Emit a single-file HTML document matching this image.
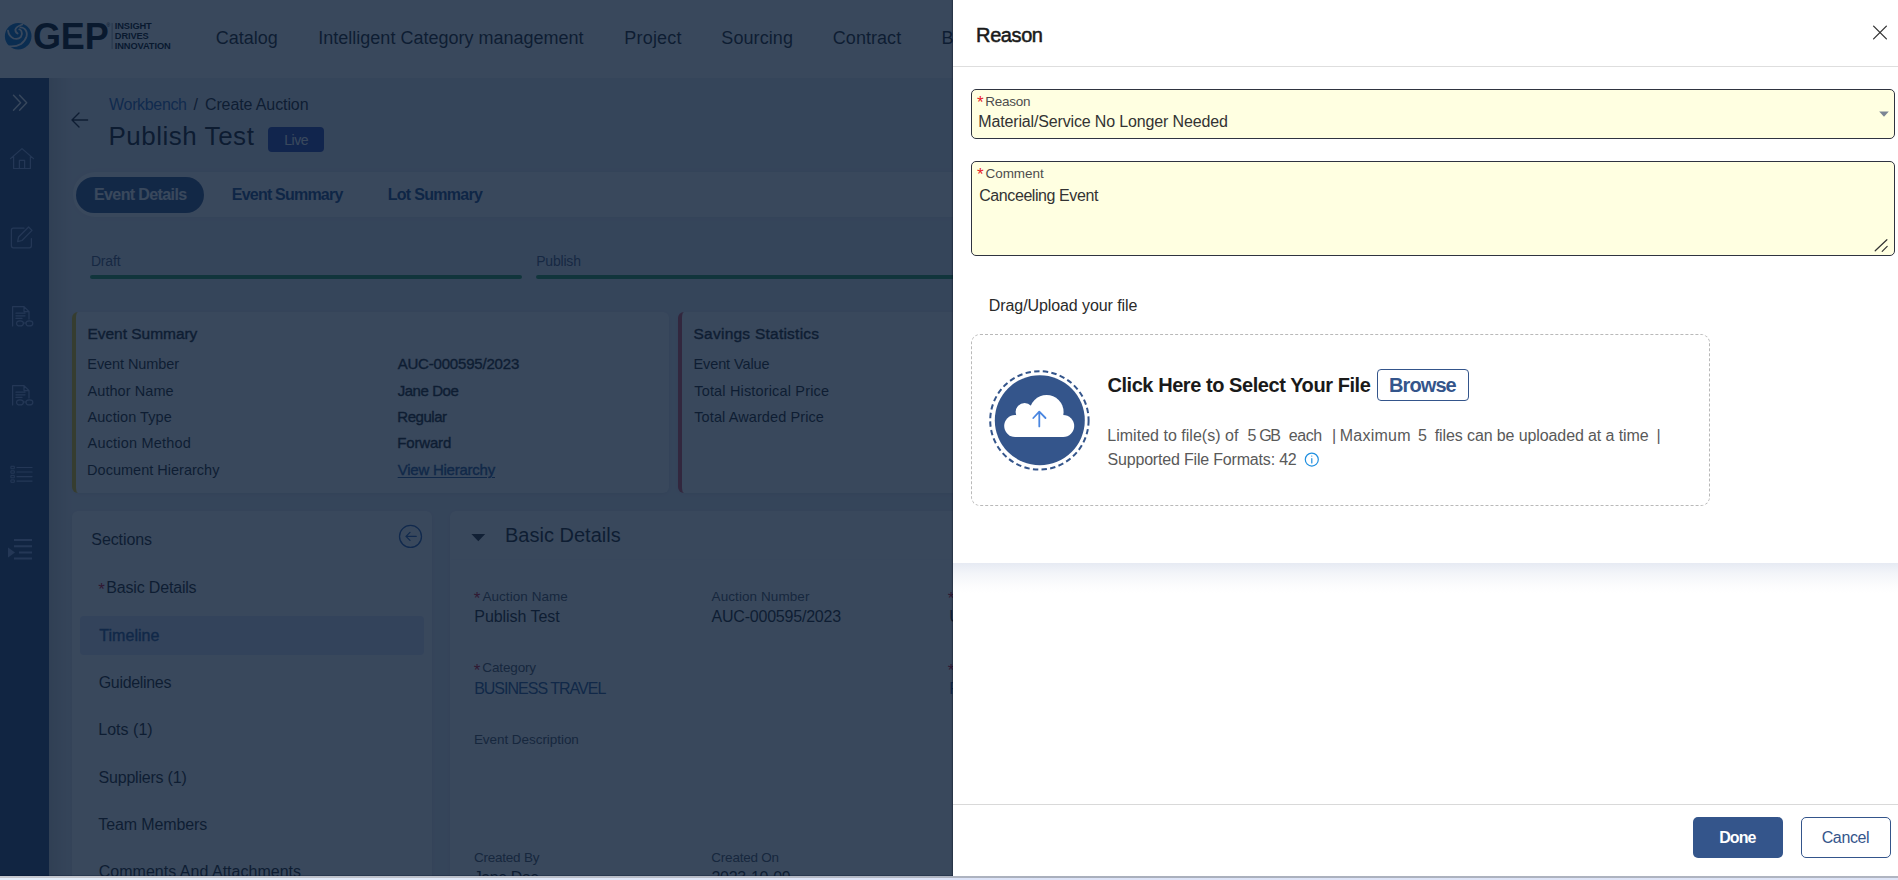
<!DOCTYPE html>
<html lang="en">
<head>
<meta charset="utf-8">
<title>Publish Test - Create Auction</title>
<style>
*{box-sizing:border-box;margin:0;padding:0}
html,body{width:1898px;height:880px;overflow:hidden;background:#ebedf5;font-family:"Liberation Sans",sans-serif}
#app{position:absolute;left:0;top:0;width:1898px;height:880px;overflow:hidden}
.a{position:absolute}
.t{position:absolute;white-space:nowrap;line-height:1}
svg{position:absolute;overflow:visible}
/* underlay */
#hdr{left:0;top:0;width:1898px;height:78px;background:#fff}
#side{left:0;top:78px;width:49px;height:802px;background:#2c4878}
#sideshadow{left:49px;top:78px;width:24px;height:802px;background:linear-gradient(90deg,rgba(120,120,100,.22),rgba(120,120,100,0))}
#tabs{left:73px;top:172px;width:1000px;height:45px;background:#fdfdfd;border-radius:22px 0 0 22px;box-shadow:0 0 6px rgba(0,0,0,.06)}
#pill{left:76px;top:177px;width:128px;height:36px;border-radius:18px;background:#34558b}
#badge{left:268px;top:127px;width:56px;height:25px;border-radius:4px;background:#2a44b0}
.bar{height:4px;border-radius:2px;background:#2f9c58;top:275px}
.card{background:#fdfdfd;border-radius:6px;box-shadow:0 1px 4px rgba(0,0,0,.08)}
#c1{left:72px;top:312px;width:597px;height:181px;border-left:4px solid #f0c419}
#c2{left:678px;top:312px;width:600px;height:181px;border-left:4px solid #d8505f}
#sec{left:72px;top:510.7px;width:360px;height:400px}
#sechl{left:80px;top:616px;width:344px;height:39px;border-radius:4px;background:#dde3f8}
#bd{left:450px;top:510.7px;width:1000px;height:400px}
#bdhead{left:451px;top:511px;width:1000px;height:49px;border-bottom:1px solid #fafafb}
.tg{font-size:9.3px;font-weight:700;color:#00060f;letter-spacing:-.12px}
/* overlay */
#ov{left:0;top:0;width:1898px;height:880px;background:rgba(11,29,54,.81)}
/* panel */
#panel{left:953px;top:0;width:945px;height:880px;background:#fff;box-shadow:-1px 0 1px rgba(0,5,20,.28)}
#pshadow{left:953px;top:563px;width:945px;height:30px;background:linear-gradient(180deg,#e6eaf3 0,#f3f5f9 35%,#fcfcfd 75%,#fff 100%)}
#pcard{left:953px;top:0;width:945px;height:563px;background:#fff;border-radius:0 0 0 7px}
#phl{left:953px;top:66px;width:945px;height:1px;background:#dedede}
.fld{background:#ffffe1;border:1.5px solid #2f3440;border-radius:5px}
#f1{left:971px;top:89px;width:924px;height:50px}
#f2{left:971px;top:161px;width:924px;height:95px}
#drop{left:971px;top:334px;width:739px;height:172px;border:1px dashed #b9b9b9;border-radius:9px}
#browse{left:1377px;top:369px;width:92px;height:32px;border:1.5px solid #34558b;border-radius:4px;background:#fff}
#pfl{left:953px;top:804px;width:945px;height:1px;background:#d9d9d9}
#done{left:1693px;top:817px;width:90px;height:41px;border-radius:5px;background:#34558b}
#cancel{left:1801px;top:817px;width:90px;height:41px;border-radius:5px;border:1.5px solid #34558b;background:#fff}
#botline{left:0;top:876px;width:1898px;height:2px;background:linear-gradient(90deg,#c5c8cf 0,#b4b9c5 45%,#a9afbc 55%,#b0b5c1 100%)}
#botsh{left:0;top:875px;width:953px;height:1px;background:rgba(0,10,40,.25)}
#bot{left:0;top:878px;width:1898px;height:2px;background:linear-gradient(90deg,#e4eefa 0,#dde4f8 50%,#dfe5f7 100%)}
</style>
</head>
<body>
<div id="app">
<!-- ======= underlying page ======= -->
<div class="a" id="hdr"></div>
<div class="a" id="side"></div>
<div class="a" id="sideshadow"></div>
<svg id="logo" style="left:0;top:0" width="200" height="78" viewBox="0 0 200 78">
<circle cx="18.2" cy="36.2" r="13.3" fill="#0a6fc4"/>
<g fill="none" stroke="#fff" stroke-width="1.8" stroke-linecap="round" transform="translate(5,22.9)">
<path d="M17.3 1.6Q11.2 3.8 10.4 6.6Q10.2 9.2 12.6 10.6"/>
<path d="M3 7.8Q3.8 13.4 8.6 15.6Q13.2 17 15.9 14Q17.7 11 16.4 8.3Q15.5 6.6 14.3 6.5"/>
<path d="M4.2 23.4Q11 24 16 21Q20.2 18 21.6 13.4Q22.6 9 19.6 6Q17.6 4.4 15.4 4.5"/>
</g>
<rect x="111.6" y="23" width="1" height="26" fill="#9aa0a8"/>
</svg>
<span class="t" id="gep" style="left:33px;top:19px;font-size:36px;font-weight:700;color:#00060f;letter-spacing:-.15px">GEP</span>
<span class="t" style="left:106.5px;top:23px;font-size:5px;color:#00060f">®</span>
<span class="t tg" style="left:114.8px;top:22px">INSIGHT</span>
<span class="t tg" style="left:114.8px;top:32px">DRIVES</span>
<span class="t tg" style="left:114.8px;top:42px">INNOVATION</span>
<svg id="sideic" style="left:0;top:78px" width="49" height="802" viewBox="0 78 49 802" fill="none" stroke-linecap="round" stroke-linejoin="round">
<g stroke="#f4f6fb" stroke-width="1.4"><path d="M13.5 95.2L20.6 102.7L13.5 110.3"/><path d="M19.6 95.2L26.7 102.7L19.6 110.3"/></g>
<g stroke="#8fa6dc" stroke-width="1.2">
<path d="M10.5 158.6L22 148.6L33.5 158.6M13.6 156.4V168.5H30.4V156.4M19.4 168.5V160.4H24.6V168.5"/>
<path d="M24 228.2H13.4a2 2 0 0 0-2 2V245.8a2 2 0 0 0 2 2H29.4a2 2 0 0 0 2-2V238.5M17.6 241.6L18.6 237L28.6 227L32 230.4L22 240.5Z"/>
<g id="docic"><path d="M12.6 326V306.6H24L29 311.6V319M24 306.6V311.6H29M16 313.2H25M16 315.8H25M16 318.4H22"/><ellipse cx="20" cy="323.4" rx="3.4" ry="2.5"/><ellipse cx="29.4" cy="323.4" rx="3.4" ry="2.5"/><path d="M23.4 323H26"/></g>
<use href="#docic" y="79"/>
<path d="M17 467.5H32M17 472H32M17 476.6H32M17 481.1H32"/>
<path d="M11.3 466.3h3v2.4h-3zM11.3 470.8h3v2.4h-3zM11.3 475.4h3v2.4h-3zM11.3 479.9h3v2.4h-3z" stroke-width="1" stroke-linejoin="miter"/>
</g>
<g stroke="#8fa6dc" stroke-width="2" stroke-linecap="butt"><path d="M14 540H32M14 546.2H32M19 552.4H32M14 558.6H32"/></g>
<path d="M8 547.4L15 552.4L8 557.6Z" fill="#8fa6dc" stroke="none"/>
</svg>
<div class="a" id="badge"></div>
<div class="a" id="tabs"></div>
<div class="a" id="pill"></div>
<div class="a bar" style="left:90px;width:432px"></div>
<div class="a bar" style="left:536px;width:432px"></div>
<div class="a card" id="c1"></div>
<div class="a card" id="c2"></div>
<div class="a card" id="sec"></div>
<div class="a" id="sechl"></div>
<div class="a card" id="bd"></div>
<div class="a" id="bdhead"></div>
<svg id="uic" style="left:0;top:0" width="953" height="880" viewBox="0 0 953 880" fill="none" stroke-linecap="round" stroke-linejoin="round">
<path d="M87.6 120H72M79 113L72 120L79 127" stroke="#1c1c24" stroke-width="1.4"/>
<circle cx="410.5" cy="536.4" r="11" stroke="#2a5db0" stroke-width="1.3"/>
<path d="M416.2 536.4H406M410 532.4L406 536.4L410 540.4" stroke="#2a5db0" stroke-width="1.3"/>
<path d="M471.4 534H485.2L478.3 541.2Z" fill="#2b2b33" stroke="none"/>
</svg>
<span id="t0" class="t" style="left:215.81px;top:29.0px;font-size:18px;color:#1c1c24;letter-spacing:0.007px;">Catalog</span>
<span id="t1" class="t" style="left:318.33px;top:29.0px;font-size:18px;color:#1c1c24;">Intelligent Category management</span>
<span id="t2" class="t" style="left:624.21px;top:29.0px;font-size:18px;color:#1c1c24;letter-spacing:0.225px;">Project</span>
<span id="t3" class="t" style="left:721.33px;top:29.0px;font-size:18px;color:#1c1c24;letter-spacing:0.087px;">Sourcing</span>
<span id="t4" class="t" style="left:832.81px;top:29.0px;font-size:18px;color:#1c1c24;letter-spacing:0.050px;">Contract</span>
<span id="t5" class="t" style="left:941.47px;top:29.0px;font-size:18px;color:#1c1c24;">Buy</span>
<span id="t6" class="t" style="left:109.11px;top:97.0px;font-size:16px;color:#2a62b2;letter-spacing:-0.343px;">Workbench</span>
<span id="t7" class="t" style="left:193.39px;top:97.0px;font-size:16px;color:#1c1c24;">/</span>
<span id="t8" class="t" style="left:204.94px;top:97.0px;font-size:16px;color:#1c1c24;letter-spacing:-0.105px;">Create Auction</span>
<span id="t9" class="t" style="left:108.42px;top:123.0px;font-size:26px;color:#15151d;letter-spacing:0.523px;">Publish Test</span>
<span id="t10" class="t" style="left:284.21px;top:133.0px;font-size:14px;color:#fff;letter-spacing:-0.463px;">Live</span>
<span id="t11" class="t" style="left:94.03px;top:187.0px;font-size:16px;color:#fff;font-weight:700;letter-spacing:-0.612px;">Event Details</span>
<span id="t12" class="t" style="left:231.86px;top:187.0px;font-size:16px;color:#1f4a8a;font-weight:700;letter-spacing:-0.792px;">Event Summary</span>
<span id="t13" class="t" style="left:387.69px;top:187.0px;font-size:16px;color:#1f4a8a;font-weight:700;letter-spacing:-0.697px;">Lot Summary</span>
<span id="t14" class="t" style="left:90.88px;top:254.0px;font-size:14px;color:#4a5878;letter-spacing:-0.148px;">Draft</span>
<span id="t15" class="t" style="left:536.16px;top:254.0px;font-size:14px;color:#4a5878;letter-spacing:-0.187px;">Publish</span>
<span id="t16" class="t" style="left:87.46px;top:326.0px;font-size:15.5px;color:#1c1c24;-webkit-text-stroke:0.40px;letter-spacing:-0.028px;">Event Summary</span>
<span id="t17" class="t" style="left:87.29px;top:357.0px;font-size:14.5px;color:#1c1c24;letter-spacing:-0.075px;">Event Number</span>
<span id="t18" class="t" style="left:87.50px;top:384.0px;font-size:14.5px;color:#1c1c24;letter-spacing:0.071px;">Author Name</span>
<span id="t19" class="t" style="left:87.48px;top:410.0px;font-size:14.5px;color:#1c1c24;letter-spacing:0.062px;">Auction Type</span>
<span id="t20" class="t" style="left:87.50px;top:436.0px;font-size:14.5px;color:#1c1c24;letter-spacing:0.204px;">Auction Method</span>
<span id="t21" class="t" style="left:87.12px;top:463.0px;font-size:14.5px;color:#1c1c24;letter-spacing:0.007px;">Document Hierarchy</span>
<span id="t22" class="t" style="left:397.67px;top:356.0px;font-size:15px;color:#1c1c24;-webkit-text-stroke:0.39px;letter-spacing:-0.192px;">AUC-000595/2023</span>
<span id="t23" class="t" style="left:397.65px;top:383.0px;font-size:15px;color:#1c1c24;-webkit-text-stroke:0.39px;letter-spacing:-0.432px;">Jane Doe</span>
<span id="t24" class="t" style="left:397.32px;top:409.0px;font-size:15px;color:#1c1c24;-webkit-text-stroke:0.39px;letter-spacing:-0.462px;">Regular</span>
<span id="t25" class="t" style="left:397.26px;top:435.0px;font-size:15px;color:#1c1c24;-webkit-text-stroke:0.39px;letter-spacing:-0.165px;">Forward</span>
<span id="t26" class="t" style="left:397.68px;top:462.0px;font-size:15px;color:#2b5694;-webkit-text-stroke:0.39px;letter-spacing:-0.235px;text-decoration:underline;text-underline-offset:2px;">View Hierarchy</span>
<span id="t27" class="t" style="left:693.52px;top:326.0px;font-size:15.5px;color:#1c1c24;-webkit-text-stroke:0.40px;letter-spacing:0.241px;">Savings Statistics</span>
<span id="t28" class="t" style="left:693.47px;top:357.0px;font-size:14.5px;color:#1c1c24;letter-spacing:-0.104px;">Event Value</span>
<span id="t29" class="t" style="left:694.26px;top:384.0px;font-size:14.5px;color:#1c1c24;letter-spacing:0.162px;">Total Historical Price</span>
<span id="t30" class="t" style="left:694.26px;top:410.0px;font-size:14.5px;color:#1c1c24;letter-spacing:0.098px;">Total Awarded Price</span>
<span id="t31" class="t" style="left:91.32px;top:532.0px;font-size:16px;color:#1c1c24;letter-spacing:-0.093px;">Sections</span>
<span id="t32" class="t" style="left:98.23px;top:581.0px;font-size:17px;color:#d0021b;">*</span>
<span id="t33" class="t" style="left:106.35px;top:580.0px;font-size:16px;color:#1c1c24;letter-spacing:-0.183px;">Basic Details</span>
<span id="t34" class="t" style="left:99.34px;top:628.0px;font-size:16px;color:#2b5694;-webkit-text-stroke:0.42px;letter-spacing:0.025px;">Timeline</span>
<span id="t35" class="t" style="left:98.73px;top:675.0px;font-size:16px;color:#1c1c24;letter-spacing:-0.320px;">Guidelines</span>
<span id="t36" class="t" style="left:98.25px;top:722.0px;font-size:16px;color:#1c1c24;letter-spacing:0.020px;">Lots (1)</span>
<span id="t37" class="t" style="left:98.54px;top:770.0px;font-size:16px;color:#1c1c24;letter-spacing:-0.207px;">Suppliers (1)</span>
<span id="t38" class="t" style="left:98.35px;top:817.0px;font-size:16px;color:#1c1c24;letter-spacing:-0.116px;">Team Members</span>
<span id="t39" class="t" style="left:98.75px;top:864.0px;font-size:16px;color:#1c1c24;letter-spacing:0.020px;">Comments And Attachments</span>
<span id="t40" class="t" style="left:504.96px;top:525.0px;font-size:20px;color:#1c1c24;letter-spacing:0.015px;">Basic Details</span>
<span id="t41" class="t" style="left:473.84px;top:590.0px;font-size:17px;color:#d0021b;">*</span>
<span id="t42" class="t" style="left:482.45px;top:590.0px;font-size:13.5px;color:#4a4f5c;letter-spacing:0.058px;">Auction Name</span>
<span id="t43" class="t" style="left:474.30px;top:609.0px;font-size:16px;color:#1c1c24;letter-spacing:-0.056px;">Publish Test</span>
<span id="t44" class="t" style="left:711.56px;top:590.0px;font-size:13.5px;color:#4a4f5c;letter-spacing:0.082px;">Auction Number</span>
<span id="t45" class="t" style="left:711.53px;top:609.0px;font-size:16px;color:#1c1c24;letter-spacing:-0.210px;">AUC-000595/2023</span>
<span id="t46" class="t" style="left:473.84px;top:662.0px;font-size:17px;color:#d0021b;">*</span>
<span id="t47" class="t" style="left:482.36px;top:661.0px;font-size:13.5px;color:#4a4f5c;letter-spacing:-0.147px;">Category</span>
<span id="t48" class="t" style="left:474.14px;top:681.0px;font-size:16px;color:#2b5694;letter-spacing:-0.993px;">BUSINESS TRAVEL</span>
<span id="t49" class="t" style="left:473.92px;top:733.0px;font-size:13.5px;color:#4a4f5c;letter-spacing:-0.052px;">Event Description</span>
<span id="t50" class="t" style="left:474.01px;top:851.0px;font-size:13.5px;color:#4a4f5c;letter-spacing:-0.237px;">Created By</span>
<span id="t51" class="t" style="left:711.36px;top:851.0px;font-size:13.5px;color:#4a4f5c;letter-spacing:-0.245px;">Created On</span>
<span id="t52" class="t" style="left:473.83px;top:870.0px;font-size:16px;color:#1c1c24;letter-spacing:-0.455px;">Jane Doe</span>
<span id="t53" class="t" style="left:711.45px;top:870.0px;font-size:16px;color:#1c1c24;letter-spacing:-0.282px;">2023-10-09</span>
<span id="t54" class="t" style="left:947.63px;top:590.0px;font-size:17px;color:#d0021b;">*</span>
<span id="t55" class="t" style="left:956.08px;top:590.0px;font-size:13.5px;color:#4a4f5c;">Currency</span>
<span id="t56" class="t" style="left:949.34px;top:609.0px;font-size:16px;color:#1c1c24;">USD</span>
<span id="t57" class="t" style="left:947.63px;top:662.0px;font-size:17px;color:#d0021b;">*</span>
<span id="t58" class="t" style="left:955.85px;top:661.0px;font-size:13.5px;color:#4a4f5c;">Region</span>
<span id="t59" class="t" style="left:949.30px;top:681.0px;font-size:16px;color:#2b5694;">Regular</span>
<div class="a" id="ov"></div>
<!-- ======= side panel ======= -->
<div class="a" id="panel"></div>
<div class="a" id="pshadow"></div>
<div class="a" id="pcard"></div>
<div class="a" id="phl"></div>
<div class="a fld" id="f1"></div>
<div class="a fld" id="f2"></div>
<div class="a" id="drop"></div>
<div class="a" id="browse"></div>
<div class="a" id="pfl"></div>
<div class="a" id="done"></div>
<div class="a" id="cancel"></div>
<svg id="pic" style="left:953px;top:0" width="945" height="880" viewBox="953 0 945 880" fill="none" stroke-linecap="round" stroke-linejoin="round">
<path d="M1873.6 26.1L1886.4 38.9M1886.4 26.1L1873.6 38.9" stroke="#333" stroke-width="1.3"/>
<path d="M1879.2 111.6H1888.8L1884 116.8Z" fill="#7b8594" stroke="none"/>
<path d="M1875.2 250.8L1886.9 239.7M1882.2 251.4L1887.2 246.4" stroke="#333" stroke-width="1.2"/>
<circle cx="1039.4" cy="420.4" r="49.2" stroke="#34558b" stroke-width="2" stroke-dasharray="5.4 3.3" stroke-linecap="butt"/>
<circle cx="1039.8" cy="420.2" r="45" fill="#34558b"/>
<g fill="#fff"><circle cx="1015.2" cy="426" r="11"/><circle cx="1024.6" cy="412" r="9"/><circle cx="1046.6" cy="411.9" r="17"/><circle cx="1063.2" cy="426" r="11"/><rect x="1015" y="416" width="48.4" height="21"/></g>
<path d="M1039.3 426.4V411.8M1033.3 418L1039.3 411.7L1045.5 418" stroke="#4a86e0" stroke-width="1.8"/>
<circle cx="1311.8" cy="459.6" r="6.5" stroke="#1f8fe0" stroke-width="1.2"/>
<path d="M1311.8 458.6V463M1311.8 456V456.1" stroke="#1f8fe0" stroke-width="1.2"/>
</svg>
<span id="t60" class="t" style="left:976.11px;top:25.0px;font-size:20px;color:#1a1a1a;-webkit-text-stroke:0.52px;letter-spacing:-0.411px;">Reason</span>
<span id="t61" class="t" style="left:977.07px;top:94.0px;font-size:17px;color:#e8202a;">*</span>
<span id="t62" class="t" style="left:985.34px;top:95.0px;font-size:13.5px;color:#4d4d4d;letter-spacing:-0.260px;">Reason</span>
<span id="t63" class="t" style="left:978.25px;top:114.0px;font-size:16px;color:#333;letter-spacing:-0.149px;">Material/Service No Longer Needed</span>
<span id="t64" class="t" style="left:977.07px;top:166.0px;font-size:17px;color:#e8202a;">*</span>
<span id="t65" class="t" style="left:985.42px;top:167.0px;font-size:13.5px;color:#4d4d4d;letter-spacing:-0.018px;">Comment</span>
<span id="t66" class="t" style="left:979.24px;top:188.0px;font-size:16px;color:#333;letter-spacing:-0.421px;">Canceeling Event</span>
<span id="t67" class="t" style="left:988.85px;top:298.0px;font-size:16px;color:#2a2a2a;letter-spacing:-0.090px;">Drag/Upload your file</span>
<span id="t68" class="t" style="left:1107.40px;top:375.0px;font-size:20px;color:#1a1a1a;font-weight:700;letter-spacing:-0.436px;">Click Here to Select Your File</span>
<span id="t69" class="t" style="left:1389.02px;top:375.0px;font-size:20px;color:#34558b;font-weight:700;letter-spacing:-0.906px;">Browse</span>
<span id="t70" class="t" style="left:1107.25px;top:428.0px;font-size:16px;color:#595959;letter-spacing:0.022px;">Limited to file(s) of</span>
<span id="t71" class="t" style="left:1247.61px;top:428.0px;font-size:16px;color:#595959;">5</span>
<span id="t72" class="t" style="left:1259.32px;top:428.0px;font-size:16px;color:#595959;letter-spacing:-1.518px;">GB</span>
<span id="t73" class="t" style="left:1288.67px;top:428.0px;font-size:16px;color:#595959;letter-spacing:-0.371px;">each</span>
<span id="t74" class="t" style="left:1332.04px;top:428.0px;font-size:16px;color:#595959;">|</span>
<span id="t75" class="t" style="left:1339.65px;top:428.0px;font-size:16px;color:#595959;letter-spacing:0.259px;">Maximum</span>
<span id="t76" class="t" style="left:1417.91px;top:428.0px;font-size:16px;color:#595959;">5</span>
<span id="t77" class="t" style="left:1434.75px;top:428.0px;font-size:16px;color:#595959;letter-spacing:-0.107px;">files can be uploaded at a time</span>
<span id="t78" class="t" style="left:1656.58px;top:428.0px;font-size:16px;color:#595959;">|</span>
<span id="t79" class="t" style="left:1107.53px;top:452.0px;font-size:16px;color:#595959;letter-spacing:-0.185px;">Supported File Formats: 42</span>
<span id="t80" class="t" style="left:1719.28px;top:830.0px;font-size:16px;color:#fff;font-weight:700;letter-spacing:-0.958px;">Done</span>
<span id="t81" class="t" style="left:1821.67px;top:830.0px;font-size:16px;color:#34558b;letter-spacing:-0.363px;">Cancel</span>
<div class="a" id="botsh"></div>
<div class="a" id="botline"></div>
<div class="a" id="bot"></div>
</div>
</body>
</html>
